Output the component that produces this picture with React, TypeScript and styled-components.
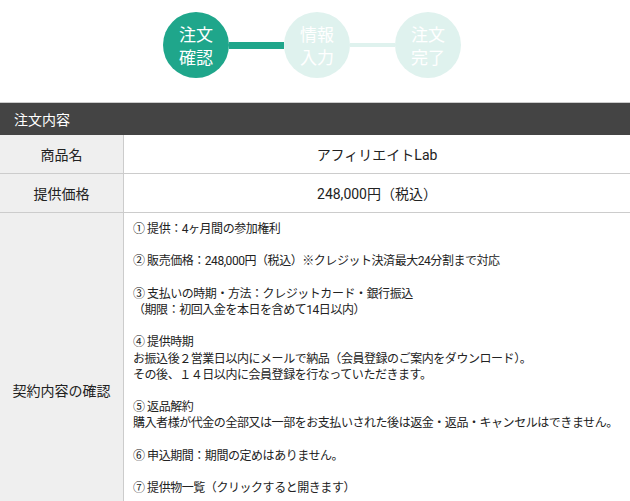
import React from "react";
import styled, { createGlobalStyle } from "styled-components";

const GlobalStyle = createGlobalStyle`
  html, body {
    margin: 0;
    padding: 0;
    background: #fff;
  }
  body {
    font-family: Roboto, "Noto Sans CJK JP", sans-serif;
    color: #333;
  }
`;

const TEAL = "#1fa68b";
const PALE = "#dff2ee";

const Steps = styled.div`
  display: flex;
  align-items: center;
  justify-content: center;
  height: 90px;
  padding-right: 6px;
  box-sizing: border-box;
`;

const StepCircle = styled.div<{ $active?: boolean }>`
  width: 66px;
  height: 66px;
  border-radius: 50%;
  background: ${(p) => (p.$active ? TEAL : PALE)};
  color: #fff;
  display: flex;
  flex-direction: column;
  align-items: center;
  justify-content: center;
  font-family: "Noto Sans CJK JP", sans-serif;
  font-size: 17px;
  flex-shrink: 0;
`;

const StepLine = styled.span`
  display: block;
  height: 23px;
  line-height: 23px;
`;

const Connector = styled.div<{ $active?: boolean; $width: number }>`
  width: ${(p) => p.$width}px;
  height: ${(p) => (p.$active ? 7 : 4)}px;
  background: ${(p) => (p.$active ? TEAL : PALE)};
  flex-shrink: 0;
`;

const Section = styled.section`
  margin-top: 12px;
  border-top: 1px solid #ccc;
`;

const SectionHeader = styled.h2`
  margin: 0;
  height: 32px;
  display: flex;
  align-items: center;
  padding-left: 14px;
  background: #444;
  color: #fff;
  font-family: "Noto Sans CJK JP", sans-serif;
  font-size: 14px;
  font-weight: normal;
`;

const Row = styled.div`
  display: grid;
  grid-template-columns: 124px 1fr;
  border-bottom: 1px solid #ccc;
`;

const LabelCell = styled.div`
  background: #efefef;
  border-right: 1px solid #ccc;
  display: flex;
  align-items: center;
  justify-content: center;
  font-family: "Noto Sans CJK JP", sans-serif;
  font-size: 14px;
  color: #222;
`;

const ValueCell = styled.div<{ $center?: boolean }>`
  min-height: 38px;
  display: flex;
  align-items: center;
  justify-content: ${(p) => (p.$center ? "center" : "flex-start")};
  font-size: 14px;
  color: #222;
`;

const Terms = styled.div`
  padding: 8px 8px 70px 9px;
  font-size: 12px;
  letter-spacing: -0.45px;
  line-height: 16.2px;
  color: #222;
  white-space: pre;
`;

const terms = `① 提供：4ヶ月間の参加権利

② 販売価格：248,000円（税込）※クレジット決済最大24分割まで対応

③ 支払いの時期・方法：クレジットカード・銀行振込
（期限：初回入金を本日を含めて14日以内）

④ 提供時期
お振込後２営業日以内にメールで納品（会員登録のご案内をダウンロード）。
その後、１４日以内に会員登録を行なっていただきます。

⑤ 返品解約
購入者様が代金の全部又は一部をお支払いされた後は返金・返品・キャンセルはできません。

⑥ 申込期間：期間の定めはありません。

⑦ 提供物一覧（クリックすると開きます）`;

const Step = ({ active, lines }: { active?: boolean; lines: string[] }) => (
  <StepCircle $active={active}>
    {lines.map((l) => (
      <StepLine key={l}>{l}</StepLine>
    ))}
  </StepCircle>
);

export default function App() {
  return (
    <>
      <GlobalStyle />
      <Steps>
        <Step active lines={["注文", "確認"]} />
        <Connector $active $width={55} />
        <Step lines={["情報", "入力"]} />
        <Connector $width={45} />
        <Step lines={["注文", "完了"]} />
      </Steps>
      <Section>
        <SectionHeader>注文内容</SectionHeader>
        <Row>
          <LabelCell>商品名</LabelCell>
          <ValueCell $center>アフィリエイトLab</ValueCell>
        </Row>
        <Row>
          <LabelCell>提供価格</LabelCell>
          <ValueCell $center>248,000円（税込）</ValueCell>
        </Row>
        <Row>
          <LabelCell>契約内容の確認</LabelCell>
          <Terms>{terms}</Terms>
        </Row>
      </Section>
    </>
  );
}
